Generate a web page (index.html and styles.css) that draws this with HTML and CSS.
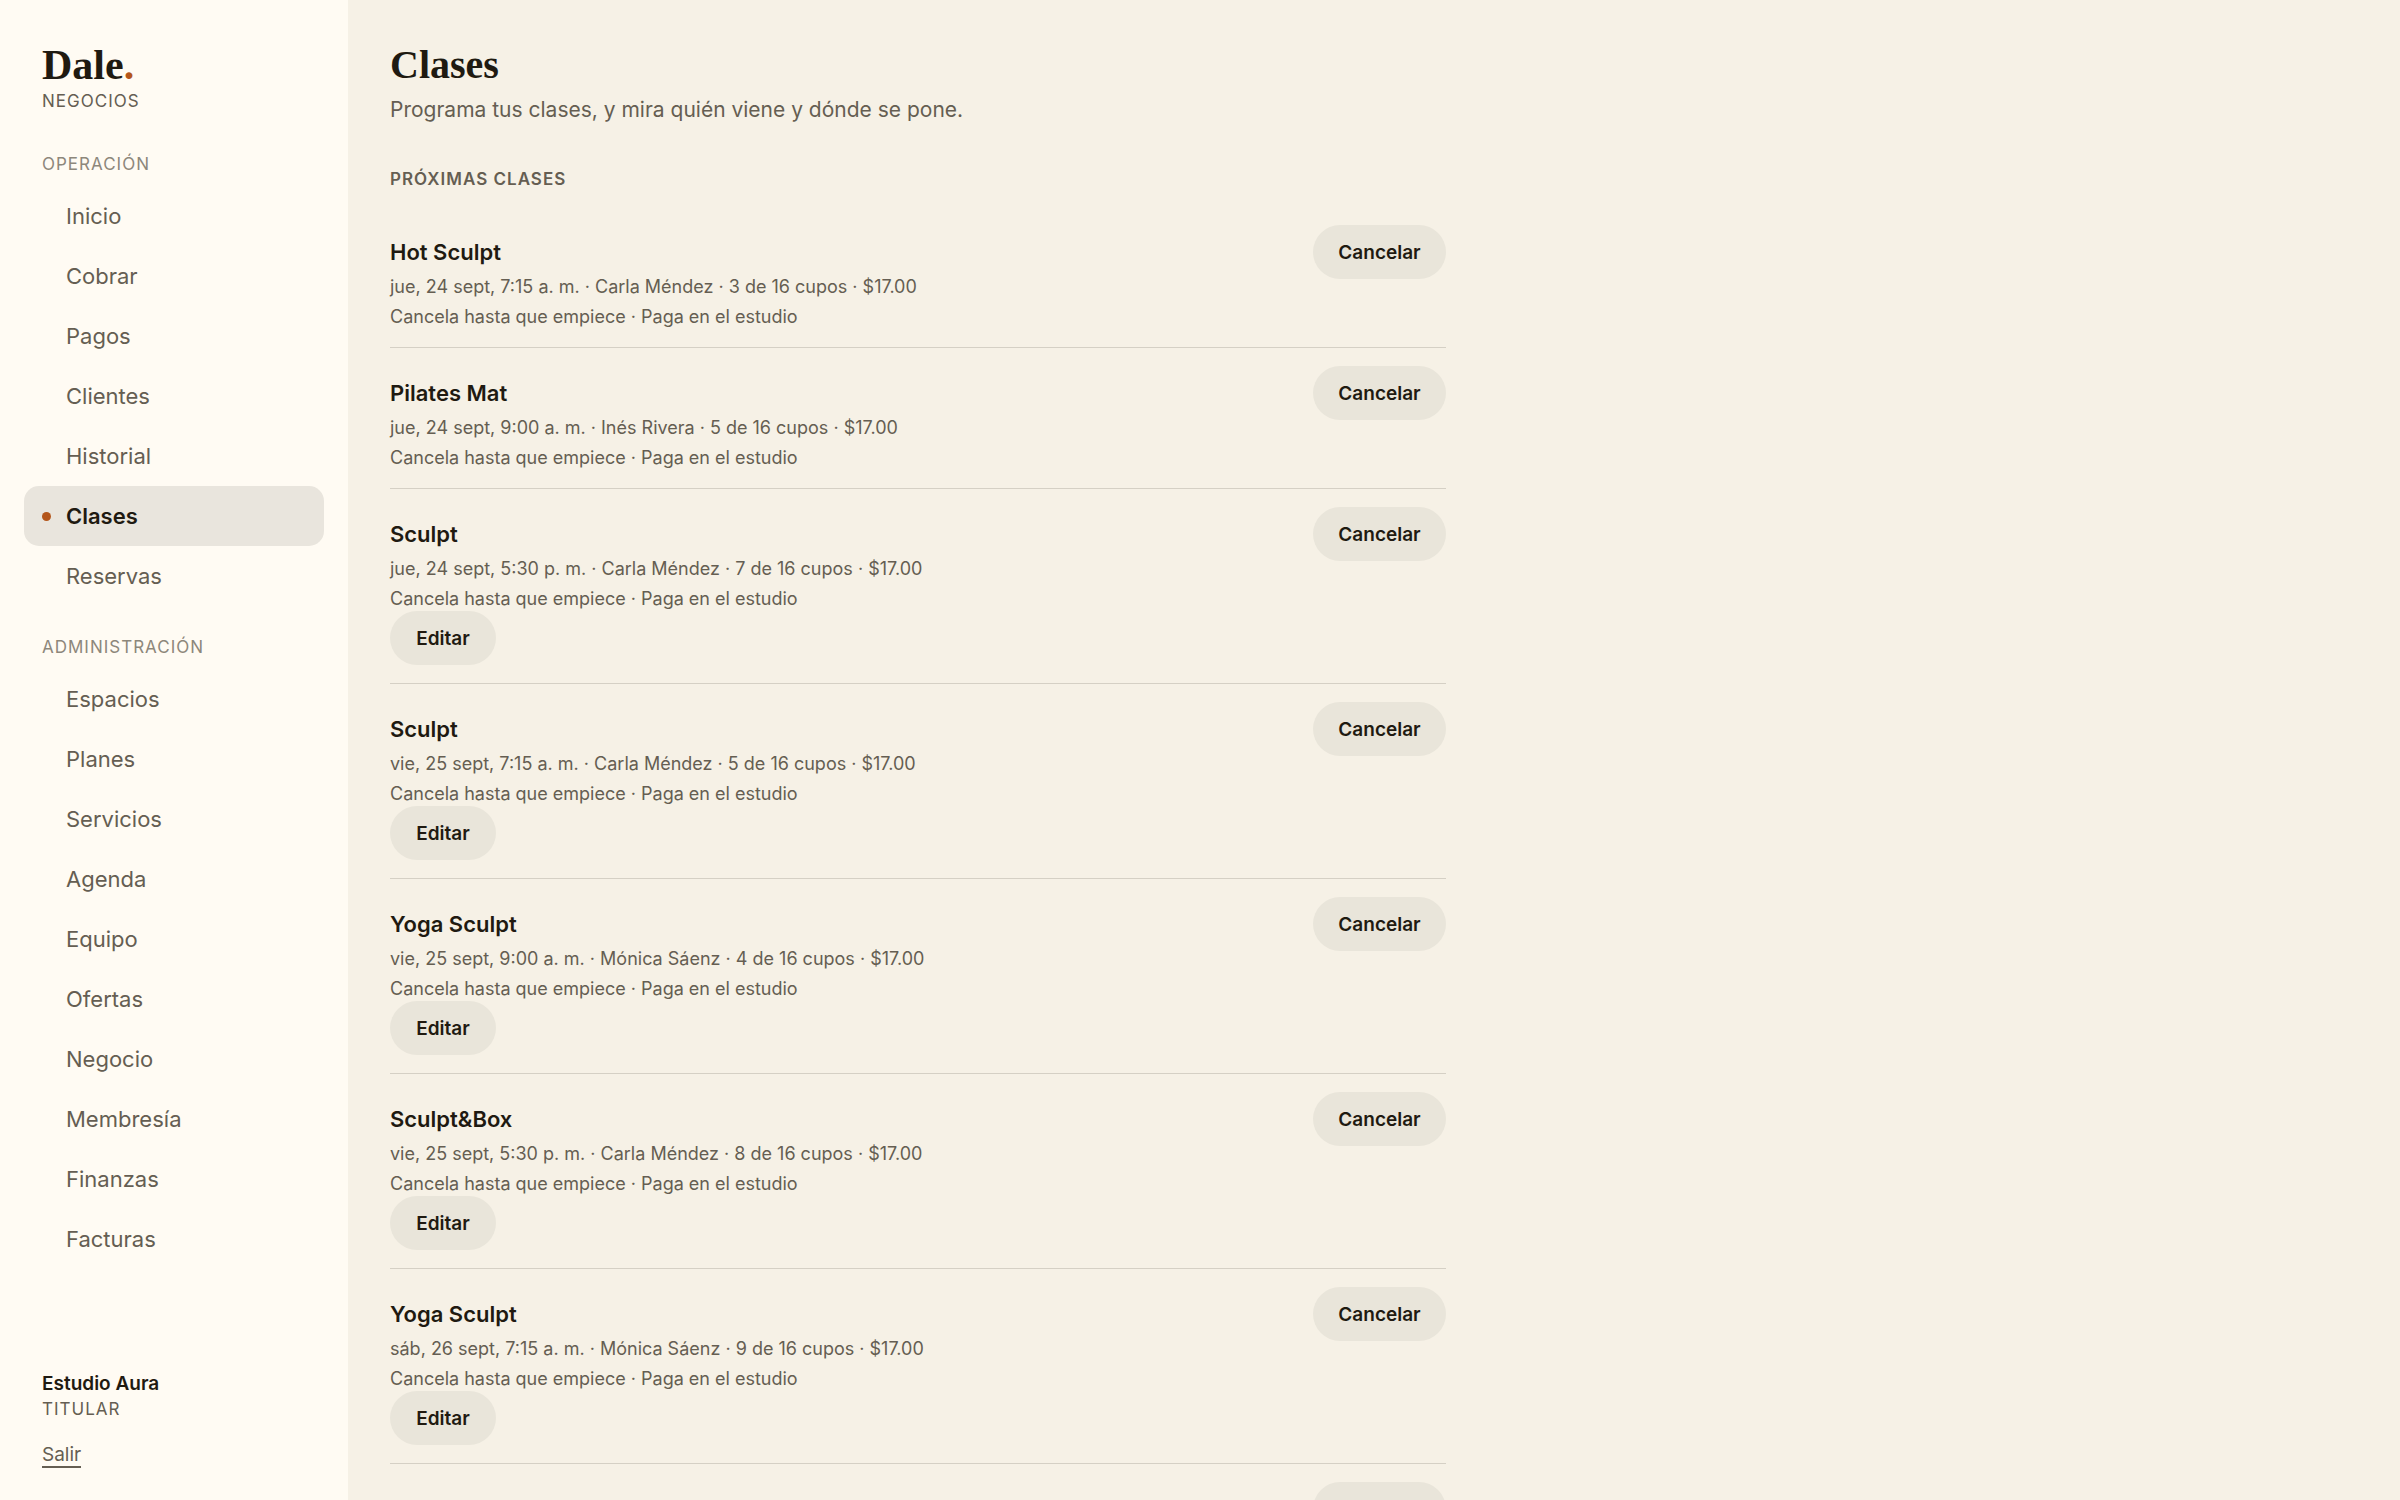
FILE: index.html
```html
<!DOCTYPE html>
<html lang="es">
<head>
    <meta charset="UTF-8">
    <meta name="viewport" content="width=device-width, initial-scale=1.0">
    <title>Clases - Dale Negocios</title>
    <link rel="stylesheet" href="styles.css">
</head>
<body>
    <div class="app">
        <!-- sidebar -->
        <aside class="sidebar">
            <div class="brand">Dale<span class="brand-dot">.</span></div>
            <div class="label brand-sub">NEGOCIOS</div>

            <nav>
                <h2 class="label nav-title">OPERACIÓN</h2>
                <ul class="nav-list">
                    <li><a href="#">Inicio</a></li>
                    <li><a href="#">Cobrar</a></li>
                    <li><a href="#">Pagos</a></li>
                    <li><a href="#">Clientes</a></li>
                    <li><a href="#">Historial</a></li>
                    <li><a href="#" class="active" aria-current="page">Clases</a></li>
                    <li><a href="#">Reservas</a></li>
                </ul>
                <h2 class="label nav-title">ADMINISTRACIÓN</h2>
                <ul class="nav-list">
                    <li><a href="#">Espacios</a></li>
                    <li><a href="#">Planes</a></li>
                    <li><a href="#">Servicios</a></li>
                    <li><a href="#">Agenda</a></li>
                    <li><a href="#">Equipo</a></li>
                    <li><a href="#">Ofertas</a></li>
                    <li><a href="#">Negocio</a></li>
                    <li><a href="#">Membresía</a></li>
                    <li><a href="#">Finanzas</a></li>
                    <li><a href="#">Facturas</a></li>
                </ul>
            </nav>

            <div class="account">
                <div class="account-name">Estudio Aura</div>
                <div class="label">TITULAR</div>
                <a href="#" class="logout">Salir</a>
            </div>
        </aside>

        <!-- content -->
        <main class="main">
            <h1>Clases</h1>
            <p class="intro">Programa tus clases, y mira quién viene y dónde se pone.</p>

            <h2 class="label section-title">PRÓXIMAS CLASES</h2>
            <ul class="class-list">
                <li class="class-row">
                    <div class="info">
                        <h3>Hot Sculpt</h3>
                        <p>jue, 24 sept, 7:15 a. m. · Carla Méndez · 3 de 16 cupos · $17.00</p>
                        <p>Cancela hasta que empiece · Paga en el estudio</p>
                    </div>
                    <button type="button" class="btn btn-cancel">Cancelar</button>
                </li>
                <li class="class-row">
                    <div class="info">
                        <h3>Pilates Mat</h3>
                        <p>jue, 24 sept, 9:00 a. m. · Inés Rivera · 5 de 16 cupos · $17.00</p>
                        <p>Cancela hasta que empiece · Paga en el estudio</p>
                    </div>
                    <button type="button" class="btn btn-cancel">Cancelar</button>
                </li>
                <li class="class-row">
                    <div class="info">
                        <h3>Sculpt</h3>
                        <p>jue, 24 sept, 5:30 p. m. · Carla Méndez · 7 de 16 cupos · $17.00</p>
                        <p>Cancela hasta que empiece · Paga en el estudio</p>
                        <button type="button" class="btn">Editar</button>
                    </div>
                    <button type="button" class="btn btn-cancel">Cancelar</button>
                </li>
                <li class="class-row">
                    <div class="info">
                        <h3>Sculpt</h3>
                        <p>vie, 25 sept, 7:15 a. m. · Carla Méndez · 5 de 16 cupos · $17.00</p>
                        <p>Cancela hasta que empiece · Paga en el estudio</p>
                        <button type="button" class="btn">Editar</button>
                    </div>
                    <button type="button" class="btn btn-cancel">Cancelar</button>
                </li>
                <li class="class-row">
                    <div class="info">
                        <h3>Yoga Sculpt</h3>
                        <p>vie, 25 sept, 9:00 a. m. · Mónica Sáenz · 4 de 16 cupos · $17.00</p>
                        <p>Cancela hasta que empiece · Paga en el estudio</p>
                        <button type="button" class="btn">Editar</button>
                    </div>
                    <button type="button" class="btn btn-cancel">Cancelar</button>
                </li>
                <li class="class-row">
                    <div class="info">
                        <h3>Sculpt&amp;Box</h3>
                        <p>vie, 25 sept, 5:30 p. m. · Carla Méndez · 8 de 16 cupos · $17.00</p>
                        <p>Cancela hasta que empiece · Paga en el estudio</p>
                        <button type="button" class="btn">Editar</button>
                    </div>
                    <button type="button" class="btn btn-cancel">Cancelar</button>
                </li>
                <li class="class-row">
                    <div class="info">
                        <h3>Yoga Sculpt</h3>
                        <p>sáb, 26 sept, 7:15 a. m. · Mónica Sáenz · 9 de 16 cupos · $17.00</p>
                        <p>Cancela hasta que empiece · Paga en el estudio</p>
                        <button type="button" class="btn">Editar</button>
                    </div>
                    <button type="button" class="btn btn-cancel">Cancelar</button>
                </li>
                <li class="class-row">
                    <div class="info"></div>
                    <button type="button" class="btn btn-cancel" aria-label="Cancelar"></button>
                </li>
            </ul>
        </main>
    </div>
</body>
</html>
```
FILE: styles.css
```css
* {
    box-sizing: border-box;
}

body {
    margin: 0;
    background: #f6f1e6;
    color: #1f1a11;
    font-family: Inter, "Liberation Sans", sans-serif;
    font-size: 22px;
}

h1, h2, h3, p, ul {
    margin: 0;
    padding: 0;
}

ul {
    list-style: none;
}

.app {
    display: flex;
    height: 100vh;
}

.label {
    color: #655e52;
    font-size: 17px;
    font-weight: 400;
    line-height: 24px;
    letter-spacing: 1px;
}

/* sidebar */
.sidebar {
    display: flex;
    flex-direction: column;
    flex-shrink: 0;
    width: 348px;
    padding: 41px 24px 32px;
    background: #fffbf3;
}

.brand {
    padding: 0 18px;
    font-family: "Liberation Serif", serif;
    font-size: 42px;
    font-weight: 700;
    line-height: 48px;
}

.brand-dot {
    color: #b4561b;
}

.brand-sub {
    padding: 0 18px;
    margin-bottom: 39px;
}

.nav-title {
    padding: 0 18px;
    margin-bottom: 10px;
    color: #8d877b;
}

.nav-list {
    margin-bottom: 29px;
}

.nav-list a {
    display: flex;
    align-items: center;
    gap: 15px;
    height: 60px;
    padding: 0 18px;
    border-radius: 15px;
    color: #655e52;
    text-decoration: none;
}

.nav-list a::before {
    content: "";
    width: 9px;
    height: 9px;
    border-radius: 50%;
}

.nav-list .active {
    background: #e9e5dd;
    color: #1f1a11;
    font-weight: 600;
}

.nav-list .active::before {
    background: #b4561b;
}

.account {
    margin-top: auto;
    padding: 0 18px;
}

.account-name {
    font-size: 19px;
    font-weight: 600;
    line-height: 26px;
}

.logout {
    display: inline-block;
    margin-top: 22px;
    border-bottom: 2px solid #655e52;
    color: #655e52;
    font-size: 19px;
    line-height: 23px;
    text-decoration: none;
}

/* content */
.main {
    flex: 1;
    padding: 41px 42px;
    overflow-y: auto;
    scrollbar-width: none;
}

h1 {
    font-family: "Liberation Serif", serif;
    font-size: 40px;
    font-weight: 700;
    line-height: 48px;
}

.intro {
    margin-top: 5px;
    color: #655e52;
    font-size: 21px;
    line-height: 32px;
}

.section-title {
    margin: 41px 0 16px;
    font-weight: 600;
}

.class-list {
    max-width: 1056px;
}

.class-row {
    display: flex;
    justify-content: space-between;
    align-items: flex-start;
    padding: 18px 0;
    border-bottom: 1px solid #d5d0c5;
}

.info {
    padding-top: 10px;
}

.info h3 {
    margin-bottom: 3px;
    font-size: 22px;
    font-weight: 600;
    line-height: 34px;
}

.info p {
    color: #655e52;
    font-size: 18px;
    line-height: 30px;
}

.info p:last-of-type {
    margin-bottom: -3px;
}

.btn {
    display: block;
    height: 54px;
    min-width: 106px;
    padding: 0 25px;
    border: 0;
    border-radius: 27px;
    background: #e9e5da;
    color: #1f1a11;
    font-family: inherit;
    font-size: 19px;
    font-weight: 600;
}

.btn-cancel {
    min-width: 133px;
}
```
